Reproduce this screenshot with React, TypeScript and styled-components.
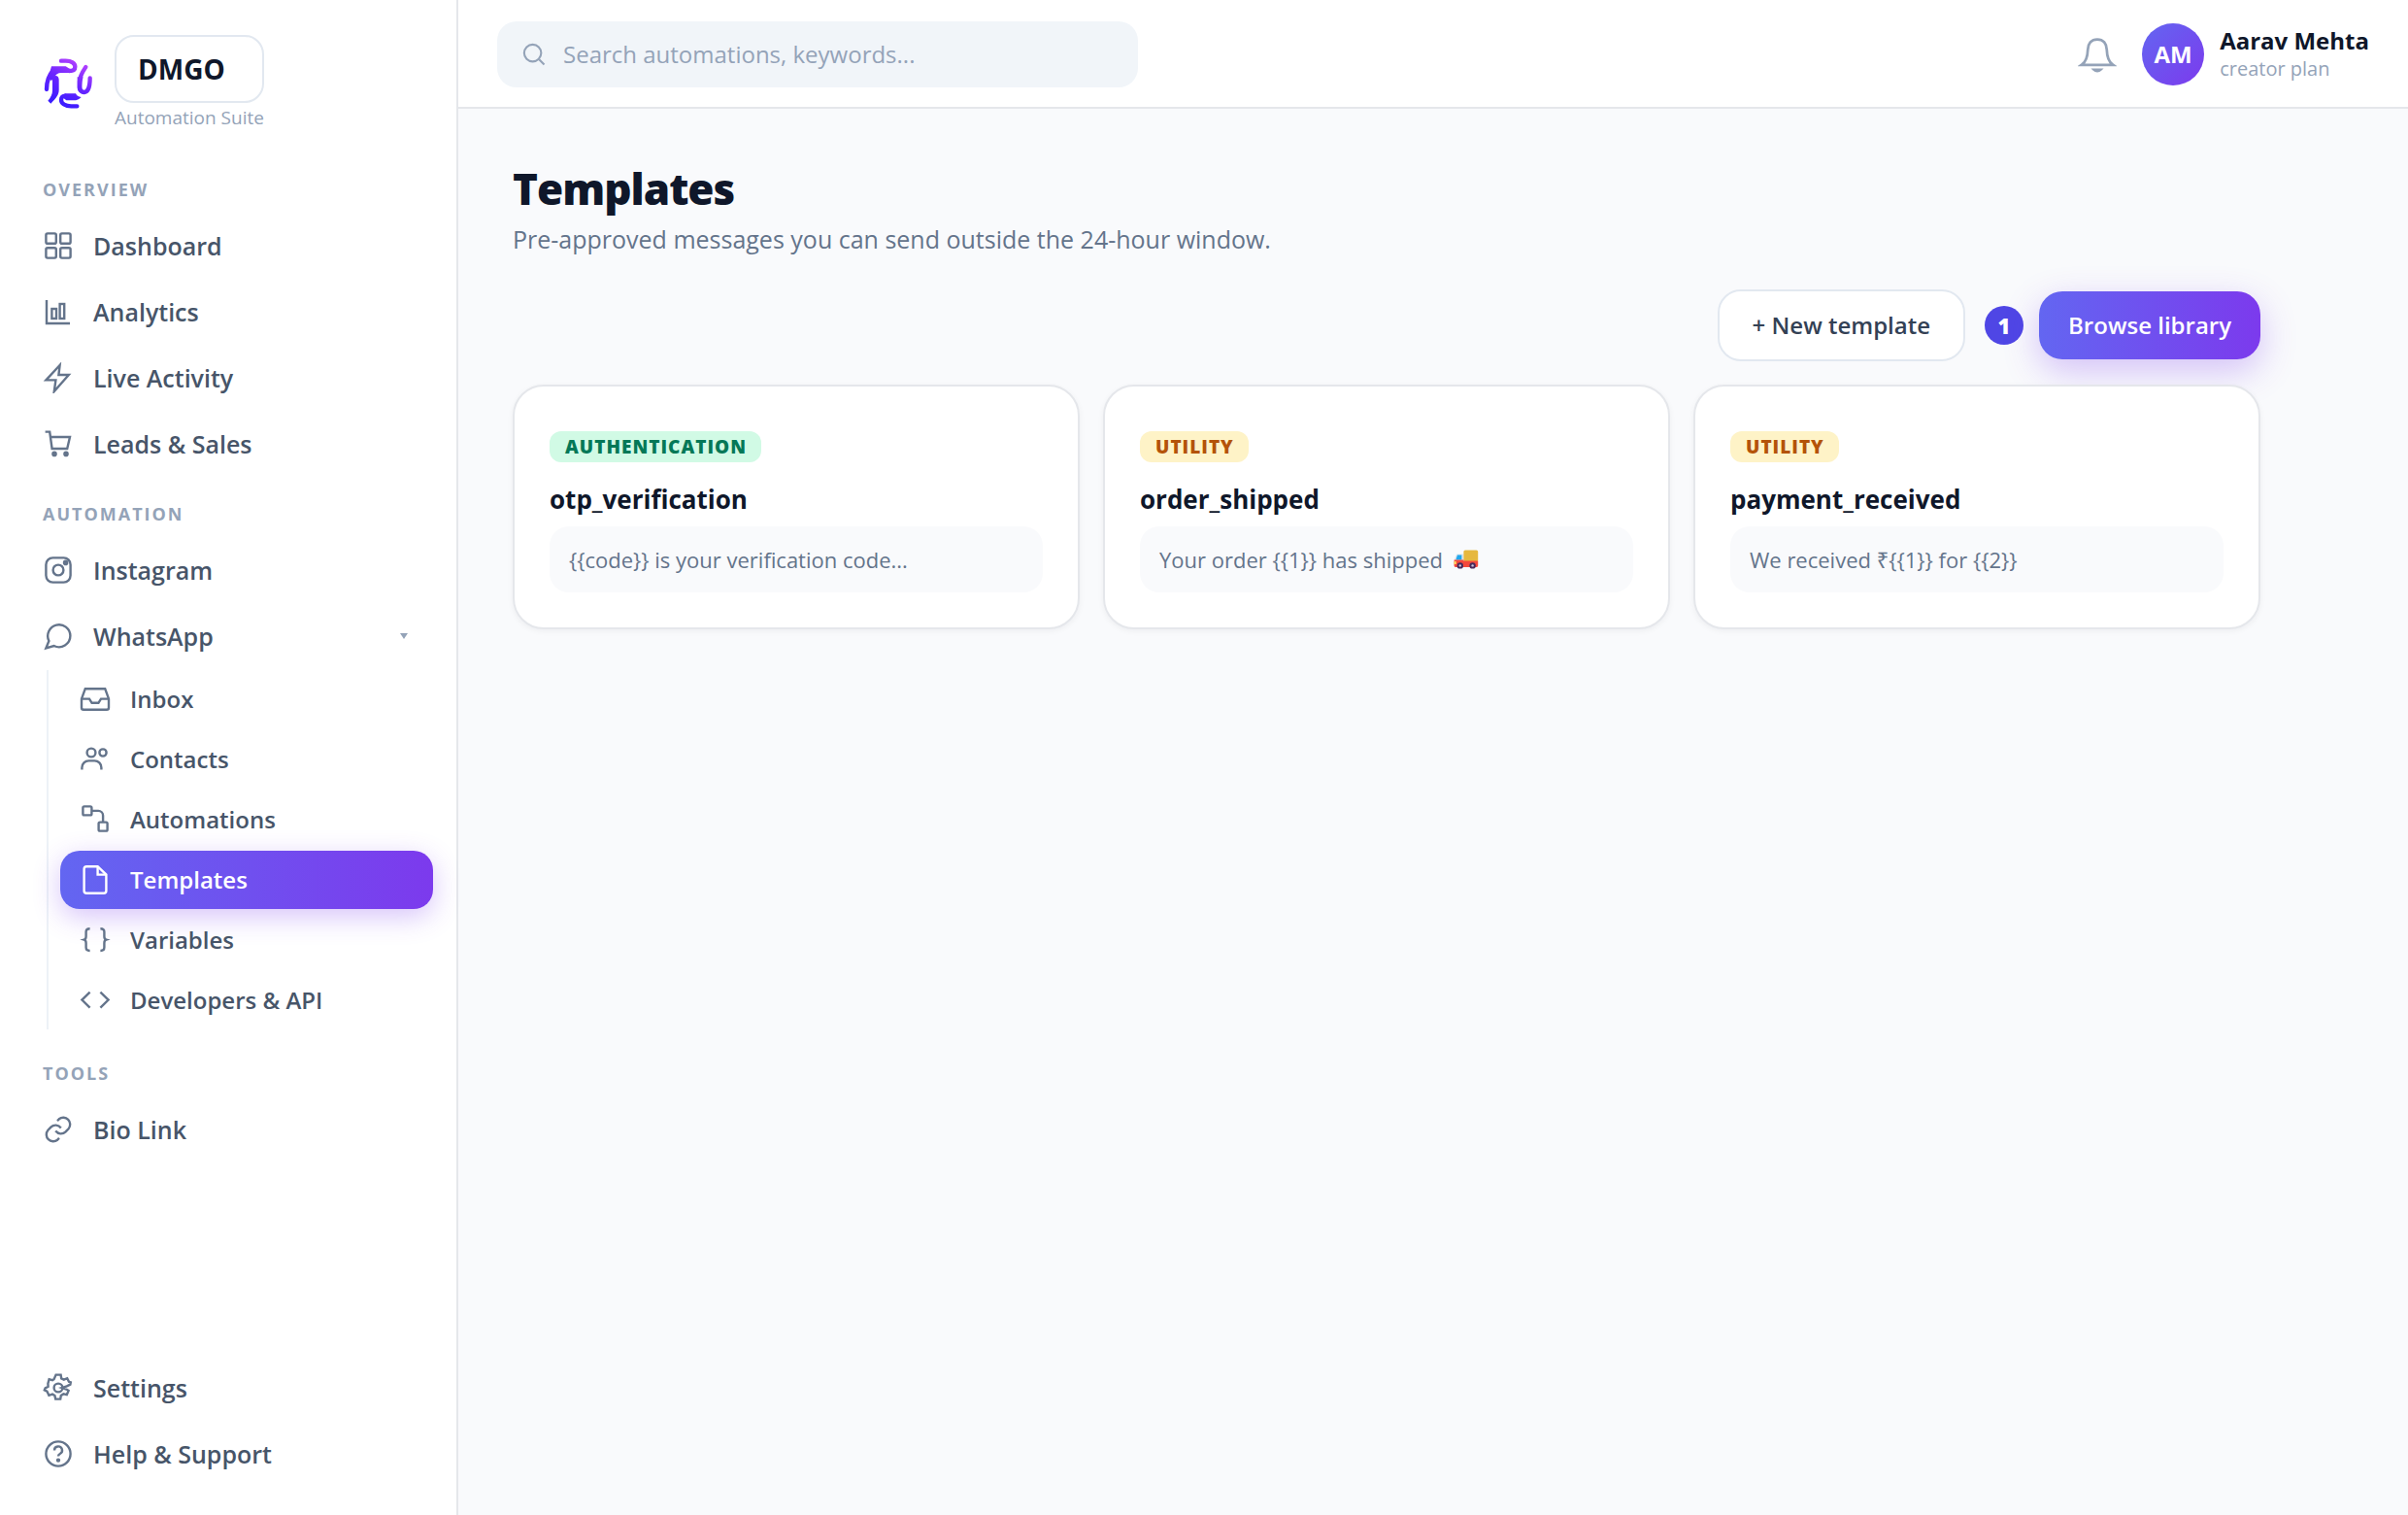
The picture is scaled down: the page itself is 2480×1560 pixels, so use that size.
import React from "react";
import styled, { createGlobalStyle, css } from "styled-components";

const color = {
  ink: "#0f172a",
  text: "#475569",
  strong: "#334155",
  muted: "#64748b",
  faint: "#94a3b8",
  line: "#e5e7eb",
  control: "#e2e8f0",
  page: "#f9fafc",
  brand: "linear-gradient(90deg, #6366f1, #7c3aed)",
};

const Global = createGlobalStyle`
  *, *::before, *::after { box-sizing: border-box; }
  body {
    margin: 0;
    background: ${color.page};
    color: ${color.ink};
    font-family: "Open Sans", "Noto Sans", sans-serif;
    font-size: 26px;
    line-height: 36px;
  }
  h1, h2, p, ul { margin: 0; padding: 0; }
  ul { list-style: none; }
  button, input { font: inherit; }
  a { color: inherit; text-decoration: none; }
  svg { display: block; flex: none; }
`;

const Shell = styled.div`
  display: flex;
  min-height: 100vh;
`;

const Sidebar = styled.aside`
  flex: none;
  display: flex;
  flex-direction: column;
  width: 472px;
  padding: 36px 24px 30px;
  background: #fff;
  border-right: 2px solid ${color.line};
`;

const Brand = styled.div`
  display: flex;
  align-items: center;
  gap: 22px;
  padding: 0 20px;
  margin-bottom: 46px;
`;

const BrandText = styled.div`
  display: flex;
  flex-direction: column;
`;

const BrandName = styled.strong`
  padding: 0 22px;
  border: 2px solid ${color.control};
  border-radius: 20px;
  font-size: 28px;
  line-height: 66px;
`;

const BrandTag = styled.span`
  color: ${color.faint};
  font-size: 19px;
  line-height: 30px;
`;

const Nav = styled.nav`
  flex: 1;
  display: flex;
  flex-direction: column;
`;

const SectionLabel = styled.h2`
  padding: 0 20px;
  margin: 0 0 12px;
  color: ${color.faint};
  font-size: 18px;
  font-weight: 700;
  line-height: 26px;
  letter-spacing: 2px;
  text-transform: uppercase;
`;

const NavList = styled.ul`
  display: flex;
  flex-direction: column;
  gap: 2px;

  & + h2 { margin-top: 26px; }
`;

const SubList = styled.ul`
  display: flex;
  flex-direction: column;
  gap: 2px;
  margin: 2px 0 6px 24px;
  padding-left: 12px;
  border-left: 2px solid #edf2f7;
`;

const navRow = css`
  display: flex;
  align-items: center;
  gap: 20px;
  width: 100%;
  padding: 0 20px;
  border: 0;
  border-radius: 20px;
  background: none;
  color: ${color.text};
  font-weight: 600;
  text-align: left;

  svg { color: ${color.muted}; }
`;

const NavLink = styled.a`
  ${navRow}
  height: 66px;
  font-size: 25px;
`;

const NavToggle = styled.button`
  ${navRow}
  height: 66px;
  font-size: 25px;
`;

const Caret = styled.span`
  margin-left: auto;
  margin-right: 6px;
  border: 4px solid transparent;
  border-top: 6px solid ${color.faint};
  border-bottom: 0;
`;

const SubLink = styled.a<{ $active?: boolean }>`
  ${navRow}
  height: 60px;
  font-size: 24px;
  ${(p) =>
    p.$active &&
    css`
      background: ${color.brand};
      box-shadow: 0 8px 28px rgba(124, 58, 237, 0.3);
      color: #fff;
      svg { color: #fff; }
    `}
`;

const Column = styled.div`
  flex: 1;
  min-width: 0;
`;

const Topbar = styled.header`
  display: flex;
  align-items: center;
  padding: 22px 40px 20px;
  background: #fff;
  border-bottom: 2px solid ${color.line};
`;

const Search = styled.label`
  display: flex;
  align-items: center;
  gap: 16px;
  flex: 0 1 660px;
  height: 68px;
  padding: 0 24px;
  border-radius: 20px;
  background: #f1f5f9;
  color: ${color.faint};
`;

const SearchInput = styled.input`
  flex: 1;
  min-width: 0;
  padding: 0;
  border: 0;
  outline: 0;
  background: none;
  color: ${color.ink};
  font-size: 24px;
  &::placeholder { color: ${color.faint}; opacity: 1; }
`;

const Account = styled.div`
  display: flex;
  align-items: center;
  margin-left: auto;
`;

const BellButton = styled.button`
  padding: 0;
  margin-right: 26px;
  border: 0;
  background: none;
  color: ${color.faint};
`;

const Avatar = styled.span`
  display: grid;
  place-items: center;
  width: 64px;
  height: 64px;
  margin-right: 16px;
  border-radius: 50%;
  background: linear-gradient(135deg, #6366f1, #7c3aed);
  color: #fff;
  font-size: 24px;
  font-weight: 700;
`;

const UserName = styled.div`
  font-size: 24px;
  font-weight: 700;
  line-height: 30px;
`;

const UserPlan = styled.div`
  color: ${color.faint};
  font-size: 20px;
  line-height: 28px;
`;

const Main = styled.main`
  max-width: 1912px;
  padding: 52px 56px;
`;

const Title = styled.h1`
  font-size: 44px;
  font-weight: 800;
  line-height: 60px;
  letter-spacing: -1px;
`;

const Lead = styled.p`
  margin-top: 4px;
  color: ${color.muted};
  font-size: 25px;
`;

const Actions = styled.div`
  display: flex;
  align-items: center;
  justify-content: flex-end;
  margin: 34px 0 24px;
`;

const Button = styled.button<{ $primary?: boolean }>`
  height: 74px;
  padding: 0 34px;
  border: 2px solid ${color.control};
  border-radius: 24px;
  background: #fff;
  color: ${color.strong};
  font-size: 24px;
  font-weight: 600;
  ${(p) =>
    p.$primary &&
    css`
      height: 70px;
      padding: 0 30px;
      border: 0;
      background: ${color.brand};
      box-shadow: 0 12px 36px rgba(124, 58, 237, 0.3);
      color: #fff;
    `}
`;

const Step = styled.span`
  display: grid;
  place-items: center;
  width: 40px;
  height: 40px;
  margin: 0 16px 0 20px;
  border-radius: 50%;
  background: #4f46e5;
  color: #fff;
  font-size: 22px;
  font-weight: 800;
`;

const Cards = styled.div`
  position: relative;
  display: grid;
  grid-template-columns: repeat(3, 1fr);
  gap: 24px;
`;

const Card = styled.article`
  display: flex;
  flex-direction: column;
  align-items: flex-start;
  padding: 46px 36px 36px;
  border: 2px solid ${color.line};
  border-radius: 32px;
  background: #fff;
  box-shadow: 0 2px 6px rgba(15, 23, 42, 0.05);
`;

const Tag = styled.span<{ $tone: "green" | "amber" }>`
  padding: 0 15px 0 16px;
  border-radius: 12px;
  background: ${(p) => (p.$tone === "green" ? "#d1fae5" : "#fef3c7")};
  color: ${(p) => (p.$tone === "green" ? "#047857" : "#b45309")};
  font-size: 19px;
  font-weight: 800;
  line-height: 32px;
  letter-spacing: 1px;
  text-transform: uppercase;
`;

const CardTitle = styled.h2`
  margin: 18px 0 8px;
  font-size: 26px;
  font-weight: 700;
  line-height: 40px;
`;

const Preview = styled.p`
  display: flex;
  align-items: center;
  gap: 11px;
  width: 100%;
  padding: 16px 20px;
  border-radius: 20px;
  background: ${color.page};
  color: ${color.muted};
  font-size: 22px;
`;

type IconProps = { size?: number; width?: number; children: React.ReactNode };

const Icon = ({ size = 32, width = 2.4, children }: IconProps) => (
  <svg
    width={size}
    height={size}
    viewBox="0 0 32 32"
    fill="none"
    stroke="currentColor"
    strokeWidth={width}
    aria-hidden="true"
  >
    {children}
  </svg>
);

const icons = {
  dashboard: (
    <>
      <rect x="3.4" y="3.4" width="10.4" height="10.4" rx="1.6" />
      <rect x="18.2" y="3.4" width="10.4" height="10.4" rx="1.6" />
      <rect x="3.4" y="18.2" width="10.4" height="10.4" rx="1.6" />
      <rect x="18.2" y="18.2" width="10.4" height="10.4" rx="1.6" />
    </>
  ),
  analytics: (
    <>
      <path d="M4 4v24h24" />
      <rect x="9.4" y="13" width="4.6" height="10" />
      <rect x="17.6" y="8" width="4.6" height="15" />
    </>
  ),
  bolt: <path d="M17.6 3L3.4 18.4h10L11.8 30 26.8 13H16.4z" />,
  cart: (
    <>
      <path d="M2.6 3.6h4.6L9.6 21h15.6L28 9H8" />
      <circle cx="12" cy="26.4" r="1.6" fill="currentColor" />
      <circle cx="24" cy="26.4" r="1.6" fill="currentColor" />
    </>
  ),
  instagram: (
    <>
      <rect x="3.4" y="3.4" width="25.2" height="25.2" rx="7" />
      <circle cx="16" cy="16" r="5.4" />
      <circle cx="23.6" cy="8.4" r="1.6" fill="currentColor" />
    </>
  ),
  chat: <path d="M28.4 15.6a11.6 11.6 0 0 1-16.8 10.4L3.4 28.4l3-7.4A11.6 11.6 0 1 1 28.4 15.6z" />,
  inbox: (
    <>
      <path d="M2 15.6v9.2a2 2 0 0 0 2 2h24a2 2 0 0 0 2-2v-9.2L26.2 5.2H5.8z" />
      <path d="M2 15.6h8l2.6 4.2h6.8l2.6-4.2h8" />
    </>
  ),
  contacts: (
    <>
      <circle cx="12" cy="9" r="4.4" />
      <circle cx="24" cy="9" r="3.6" />
      <path d="M2.4 26.4v-2a7 7 0 0 1 7-7h6a7 7 0 0 1 7 7v2" />
    </>
  ),
  flow: (
    <>
      <rect x="3.4" y="2.4" width="9" height="9" rx="1.4" />
      <rect x="19.6" y="18.6" width="9" height="9" rx="1.4" />
      <path d="M12.4 6.9h6.8a4.9 4.9 0 0 1 4.9 4.9v6.8" />
    </>
  ),
  file: (
    <>
      <path d="M18.6 2.2H7.2a2.6 2.6 0 0 0-2.6 2.6v22.4a2.6 2.6 0 0 0 2.6 2.6h17.6a2.6 2.6 0 0 0 2.6-2.6V10.6z" />
      <path d="M18.6 2.2v8.4h8.8" />
    </>
  ),
  braces: (
    <>
      <path d="M10.6 4.2c-2.8 0-4 1-4 3.4v4.6c0 1.8-.6 3-2 3.4 1.4.4 2 1.6 2 3.4v4.6c0 2.4 1.2 3.4 4 3.4" />
      <path d="M21.4 4.2c2.8 0 4 1 4 3.4v4.6c0 1.8.6 3 2 3.4-1.4.4-2 1.6-2 3.4v4.6c0 2.4-1.2 3.4-4 3.4" />
    </>
  ),
  code: <path d="M10.6 7.6L2.4 15.6l8.2 8M21.4 7.6l8.2 8-8.2 8" />,
  link: (
    <>
      <path d="M13.2 17.6a7 7 0 0 0 10.4.8l3-3.2a7 7 0 0 0-9.8-9.9l-1.8 1.8" />
      <path d="M18.8 14.4a7 7 0 0 0-10.4-.8l-3 3.2a7 7 0 0 0 9.8 9.9l1.8-1.8" />
    </>
  ),
  gear: (
    <>
      <circle cx="16" cy="16" r="4.4" />
      <path d="M13.6 2.6h5l.6 3.8 2.6 1.2 3.4-1.4 1.8 3.6 1.8.6-.4 2.2-3.6 1.8-5 1.6 4.6 1.6 2.2 1.4-1.8 4.2-3.4-.8-2.6 1.6-.6 3.6h-5l-.8-3.6-2.4-1.4-3.6 1.2-2-4.2-2.6-1.2.8-2 3-1.6-.2-3.2 1.2-4.4 3.4 1 1.6-1z" />
    </>
  ),
  help: (
    <>
      <circle cx="16" cy="16" r="12.6" />
      <path d="M12 12.4a4 4 0 1 1 5.8 3.6c-1.2.6-1.8 1.2-1.8 2.6" />
      <circle cx="16" cy="22.6" r="1" fill="currentColor" />
    </>
  ),
};

type IconName = keyof typeof icons;

const Logo = () => (
  <svg width="52" height="56" viewBox="132 174 156 168" role="img" aria-label="DMGO logo">
    <defs>
      <linearGradient id="mark" gradientUnits="userSpaceOnUse" x1="245" y1="185" x2="180" y2="320">
        <stop offset="0" stopColor="#b743ff" />
        <stop offset="0.5" stopColor="#6a24ff" />
        <stop offset="1" stopColor="#3a1cff" />
      </linearGradient>
    </defs>
    <g fill="none" stroke="url(#mark)" strokeWidth="13" strokeLinecap="round">
      <path d="M189 188h14c18 0 29 8 29 18 0 9-8 13-18 13" />
      <path d="M166 216c-14 14-22 32-22 60" />
      <path d="M265 207c-8 12-18 26-19 44v20c1 8 6 14 14 14 10 0 18-14 18-44" />
      <path d="M238 328h-18c-18 0-31-8-31-20 0-8 6-12 12-12" />
    </g>
    <g fill="url(#mark)">
      <path d="M159 205h44l12 7 8 13h-34c-10 0-17 5-21 15l-10 10-8-14z" />
      <path d="M162 246c0-7 4-12 10-12s10 5 10 12v32c0 14-8 24-25 42l-9-9c9-10 14-20 14-32z" />
      <path d="M239 238h18c-3 10-4 20-4 36l-2 14c-8-3-12-9-12-18z" />
      <path d="M200 289h34c2 6 8 10 17 11-6 7-14 10-23 10h-20c-4 0-8-4-12-8z" />
    </g>
  </svg>
);

const Truck = () => (
  <svg width="26" height="20" viewBox="0 0 26 20" role="img" aria-label="delivery truck">
    <path d="M3.4 4.6h7V12H1V9.4z" fill="#d8e3ee" />
    <path d="M4 5.6h4.4v4.8H2.4z" fill="#1fa7ee" />
    <rect x="10.4" y="0.4" width="14.8" height="12" rx="1.6" fill="#e6b83f" />
    <path d="M0.6 10.6h9.8v1h14.8v5a1.4 1.4 0 0 1-1.4 1.4H2a1.4 1.4 0 0 1-1.4-1.4z" fill="#f4483c" />
    <rect x="0.6" y="12" width="2.2" height="3" fill="#ffd35c" />
    <circle cx="6.8" cy="16.4" r="3.2" fill="#472a5c" />
    <circle cx="6.8" cy="16.4" r="1.2" fill="#cdc3d8" />
    <circle cx="19.6" cy="16.4" r="3.2" fill="#472a5c" />
    <circle cx="19.6" cy="16.4" r="1.2" fill="#cdc3d8" />
  </svg>
);

const Item = ({ icon, children }: { icon: IconName; children: React.ReactNode }) => (
  <li>
    <NavLink href="#">
      <Icon>{icons[icon]}</Icon>
      {children}
    </NavLink>
  </li>
);

const whatsapp: { icon: IconName; label: string; active?: boolean }[] = [
  { icon: "inbox", label: "Inbox" },
  { icon: "contacts", label: "Contacts" },
  { icon: "flow", label: "Automations" },
  { icon: "file", label: "Templates", active: true },
  { icon: "braces", label: "Variables" },
  { icon: "code", label: "Developers & API" },
];

const templates: { tone: "green" | "amber"; tag: string; name: string; body: string; truck?: boolean }[] = [
  { tone: "green", tag: "Authentication", name: "otp_verification", body: "{{code}} is your verification code..." },
  { tone: "amber", tag: "Utility", name: "order_shipped", body: "Your order {{1}} has shipped", truck: true },
  { tone: "amber", tag: "Utility", name: "payment_received", body: "We received ₹{{1}} for {{2}}" },
];

export default function App() {
  return (
    <Shell>
      <Global />
      <Sidebar>
        <Brand>
          <Logo />
          <BrandText>
            <BrandName>DMGO</BrandName>
            <BrandTag>Automation Suite</BrandTag>
          </BrandText>
        </Brand>
        <Nav>
          <SectionLabel>Overview</SectionLabel>
          <NavList>
            <Item icon="dashboard">Dashboard</Item>
            <Item icon="analytics">Analytics</Item>
            <Item icon="bolt">Live Activity</Item>
            <Item icon="cart">Leads &amp; Sales</Item>
          </NavList>
          <SectionLabel>Automation</SectionLabel>
          <NavList>
            <Item icon="instagram">Instagram</Item>
            <li>
              <NavToggle type="button" aria-expanded="true">
                <Icon>{icons.chat}</Icon>
                WhatsApp
                <Caret />
              </NavToggle>
              <SubList>
                {whatsapp.map((item) => (
                  <li key={item.label}>
                    <SubLink href="#" $active={item.active} aria-current={item.active ? "page" : undefined}>
                      <Icon>{icons[item.icon]}</Icon>
                      {item.label}
                    </SubLink>
                  </li>
                ))}
              </SubList>
            </li>
          </NavList>
          <SectionLabel>Tools</SectionLabel>
          <NavList>
            <Item icon="link">Bio Link</Item>
          </NavList>
        </Nav>
        <NavList>
          <Item icon="gear">Settings</Item>
          <Item icon="help">Help &amp; Support</Item>
        </NavList>
      </Sidebar>
      <Column>
        <Topbar>
          <Search>
            <Icon size={28} width={2.4}>
              <circle cx="14.4" cy="14.4" r="10" />
              <path d="M22 22l6 6" />
            </Icon>
            <SearchInput type="text" aria-label="Search" placeholder="Search automations, keywords..." />
          </Search>
          <Account>
            <BellButton type="button" aria-label="Notifications">
              <Icon size={40} width={2.2}>
                <path d="M16 3.6c-5 0-7.6 3.6-7.8 8.4-.2 6-1.2 10-5 12.6h25.6c-3.8-2.6-4.8-6.600-5-12.600-.2-4.800-2.800-8.400-7.800-8.400z" />
                <path d="M13.400 28.600c1.400 1.400 3.800 1.400 5.200 0z" />
              </Icon>
            </BellButton>
            <Avatar>AM</Avatar>
            <div>
              <UserName>Aarav Mehta</UserName>
              <UserPlan>creator plan</UserPlan>
            </div>
          </Account>
        </Topbar>
        <Main>
          <Title>Templates</Title>
          <Lead>Pre-approved messages you can send outside the 24-hour window.</Lead>
          <Actions>
            <Button type="button">+ New template</Button>
            <Step>1</Step>
            <Button type="button" $primary>
              Browse library
            </Button>
          </Actions>
          <Cards>
            {templates.map((t) => (
              <Card key={t.name}>
                <Tag $tone={t.tone}>{t.tag}</Tag>
                <CardTitle>{t.name}</CardTitle>
                <Preview>
                  {t.body}
                  {t.truck && <Truck />}
                </Preview>
              </Card>
            ))}
          </Cards>
        </Main>
      </Column>
    </Shell>
  );
}
